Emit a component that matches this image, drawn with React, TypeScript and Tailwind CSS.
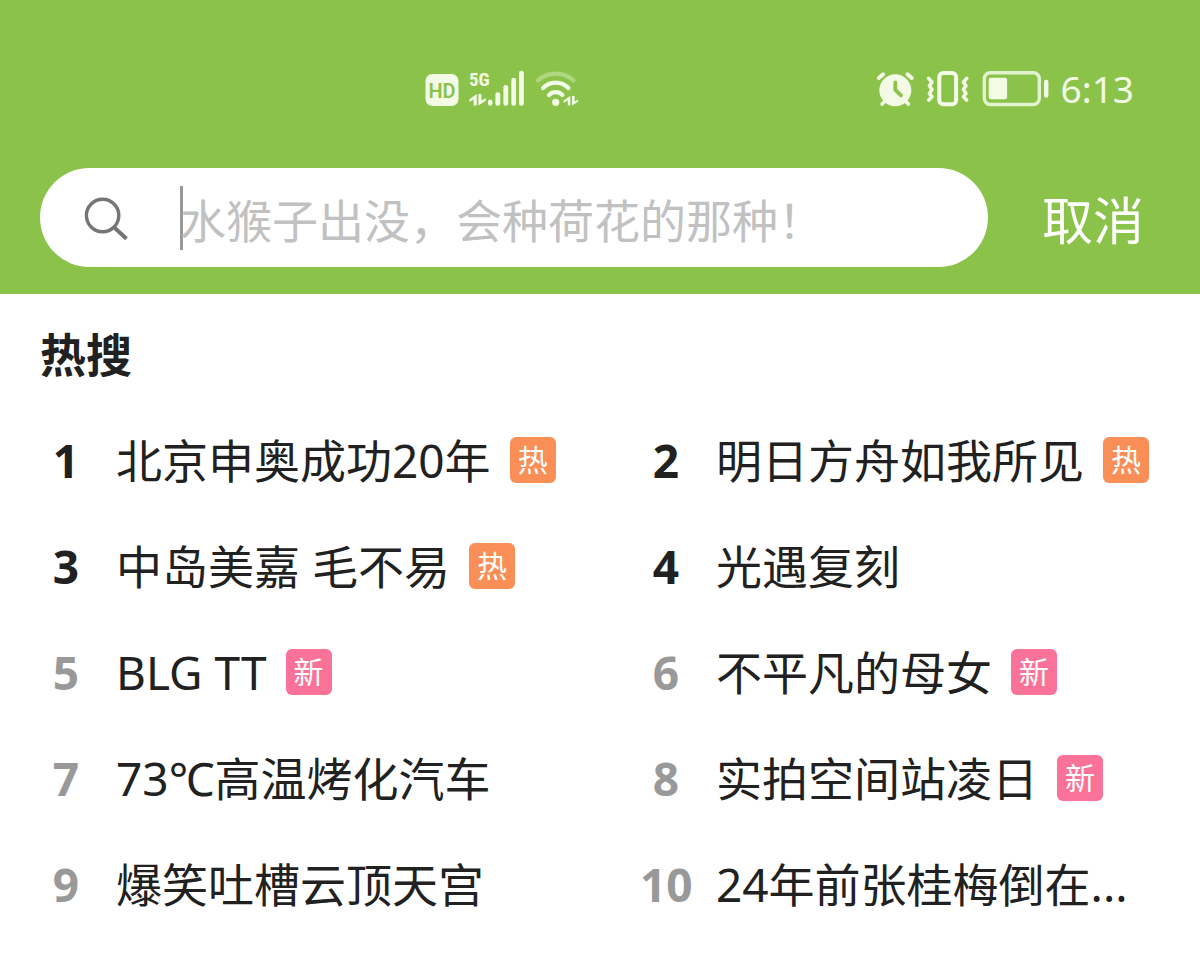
type Tag = "热" | "新";

interface Topic {
  title: string;
  tag?: Tag;
}

const topics: Topic[] = [
  { title: "北京申奥成功20年", tag: "热" },
  { title: "明日方舟如我所见", tag: "热" },
  { title: "中岛美嘉 毛不易", tag: "热" },
  { title: "光遇复刻" },
  { title: "BLG TT", tag: "新" },
  { title: "不平凡的母女", tag: "新" },
  { title: "73℃高温烤化汽车" },
  { title: "实拍空间站凌日", tag: "新" },
  { title: "爆笑吐槽云顶天宫" },
  { title: "24年前张桂梅倒在..." },
];

const tagColors: Record<Tag, string> = {
  热: "bg-[#fa8e57]",
  新: "bg-[#fb7299]",
};

function HdIcon() {
  return (
    <svg width="34" height="38" viewBox="0 0 34 38">
      <rect x="0.5" y="4" width="33" height="32" rx="7" fill="currentColor" />
      <text
        x="17"
        y="27.5"
        textAnchor="middle"
        fill="#8bc34a"
        className="font-['Roboto',sans-serif] text-[20px] font-semibold"
      >
        HD
      </text>
    </svg>
  );
}

function SignalIcon() {
  return (
    <svg width="56" height="38" viewBox="0 0 56 38" fill="currentColor" className="overflow-visible">
      <text
        x="0"
        y="16"
        className="font-['Roboto_Condensed','Liberation_Sans_Narrow','Roboto',sans-serif] text-[19px] font-bold"
      >
        5G
      </text>
      <path d="M4.6 35.5V29.5L0.4 32V29.3L7.8 24V35.5ZM9.4 24H12.4V30.6L16.8 28V30.8L9.4 35.5Z" />
      <rect x="19" y="29.5" width="4.4" height="6.2" rx="2.2" />
      <rect x="26.4" y="22.3" width="4.8" height="13.4" rx="2.2" />
      <rect x="34.4" y="15" width="4.8" height="20.7" rx="2.2" />
      <rect x="42.3" y="7.7" width="4.8" height="28" rx="2.2" />
      <rect x="50" y="0.7" width="4.8" height="35" rx="2.2" />
    </svg>
  );
}

function WifiIcon() {
  return (
    <svg width="44" height="38" viewBox="0 0 44 38" fill="none" stroke="currentColor" strokeWidth="4.2" strokeLinecap="round">
      <path d="M3 10.3A26.8 26.8 0 0 1 38.4 10.3" opacity="0.35" />
      <path d="M8 18A17.6 17.6 0 0 1 33.4 18" />
      <path d="M14 25A9.4 9.4 0 0 1 27.4 25" />
      <circle cx="20.7" cy="32.3" r="3.6" fill="currentColor" stroke="none" />
      <path
        d="M32.8 35.5V30.5L28.6 33V30.6L35.3 26V35.5ZM37 26H39.6V31.6L43 29.4V31.8L37 35.5Z"
        fill="currentColor"
        stroke="none"
      />
    </svg>
  );
}

function AlarmIcon() {
  return (
    <svg width="40" height="38" viewBox="0 0 40 38" fill="none" stroke="currentColor" strokeLinecap="round">
      <circle cx="20.3" cy="20.3" r="16" fill="currentColor" stroke="none" />
      <path d="M3.8 8L8.2 4.2M32.4 4.2L36.8 8M7.2 34L11 30M33.4 34L29.6 30" strokeWidth="3.8" />
      <path d="M20.3 12.4V19.8L26 25.4" stroke="#8bc34a" strokeWidth="3.8" strokeLinejoin="round" />
    </svg>
  );
}

function VibrateIcon() {
  return (
    <svg
      width="46"
      height="38"
      viewBox="0 0 46 38"
      fill="none"
      stroke="currentColor"
      strokeLinecap="round"
      strokeLinejoin="round"
    >
      <rect x="14.3" y="3" width="16.8" height="31.2" rx="4" strokeWidth="4" />
      <path
        d="M3.6 8.4L7 12.2L4.4 15.8L7 19.6L4.4 23.4L7 26.8L3.8 30M41.8 8.4L38.4 12.2L41 15.8L38.4 19.6L41 23.4L38.4 26.8L41.6 30"
        strokeWidth="3.6"
      />
    </svg>
  );
}

function BatteryIcon() {
  return (
    <svg width="70" height="38" viewBox="0 0 70 38" fill="currentColor">
      <rect x="3.3" y="2.7" width="55" height="31.8" rx="6" fill="none" stroke="currentColor" strokeWidth="3.4" opacity="0.85" />
      <rect x="7.7" y="7.7" width="18.4" height="21.6" rx="2" />
      <rect x="63" y="9.8" width="4.4" height="18" rx="2.2" />
    </svg>
  );
}

function StatusBar() {
  return (
    <div className="flex items-center justify-between pt-[70px] pr-[66px] pl-[425px] text-[#f3fbe6]">
      <div className="flex items-center gap-[10px]">
        <HdIcon />
        <SignalIcon />
        <WifiIcon />
      </div>
      <div className="flex items-center gap-[10px]">
        <AlarmIcon />
        <VibrateIcon />
        <BatteryIcon />
        <span className="text-[37px] leading-[38px]">6:13</span>
      </div>
    </div>
  );
}

function SearchBar() {
  return (
    <form className="flex items-center pt-[60px] pr-14 pb-[27px] pl-10">
      <label className="flex h-[99px] min-w-0 flex-1 items-center rounded-full bg-white pr-10 pl-11">
        <svg width="46" height="46" viewBox="0 0 46 46" fill="none" stroke="#757575" strokeWidth="3.4">
          <circle cx="18.6" cy="20.5" r="16.2" />
          <path d="M30 32.2L42.5 43.8" strokeWidth="4" />
        </svg>
        <span className="ml-[50px] h-16 w-[3px] shrink-0 bg-[#999999]" />
        <input
          type="text"
          aria-label="搜索"
          placeholder="水猴子出没，会种荷花的那种！"
          className="-ml-[3px] min-w-0 flex-1 bg-transparent pt-1 text-[46px] leading-[64px] outline-none placeholder:text-[#c1c1c1]"
        />
      </label>
      <button type="button" className="ml-[54px] pt-1 text-[51px] leading-[64px] text-white">
        取消
      </button>
    </form>
  );
}

function TopicItem({ topic, rank }: { topic: Topic; rank: number }) {
  return (
    <li className="min-w-0 pr-10 pl-10">
      <a href="#" className="flex h-[106px] items-center">
        <span
          className={`w-[52px] shrink-0 text-center text-[46px] leading-[64px] font-bold ${
            rank <= 4 ? "text-[#212121]" : "text-[#999999]"
          }`}
        >
          {rank}
        </span>
        <span className="ml-6 truncate text-[46px] leading-[64px]">{topic.title}</span>
        {topic.tag && (
          <span
            className={`ml-[19px] size-[46px] shrink-0 rounded-md text-center text-[30px] leading-[46px] text-white ${tagColors[topic.tag]}`}
          >
            {topic.tag}
          </span>
        )}
      </a>
    </li>
  );
}

export default function App() {
  return (
    <div className="min-h-screen bg-white font-['Noto_Sans','Noto_Sans_CJK_SC',sans-serif] text-[#212121]">
      <header className="bg-[#8bc34a]">
        <StatusBar />
        <SearchBar />
      </header>
      <main>
        <h1 className="px-10 pt-7 pb-[21px] text-[46px] leading-[64px] font-bold">热搜</h1>
        <ol className="grid grid-cols-2">
          {topics.map((topic, index) => (
            <TopicItem key={topic.title} topic={topic} rank={index + 1} />
          ))}
        </ol>
      </main>
    </div>
  );
}
